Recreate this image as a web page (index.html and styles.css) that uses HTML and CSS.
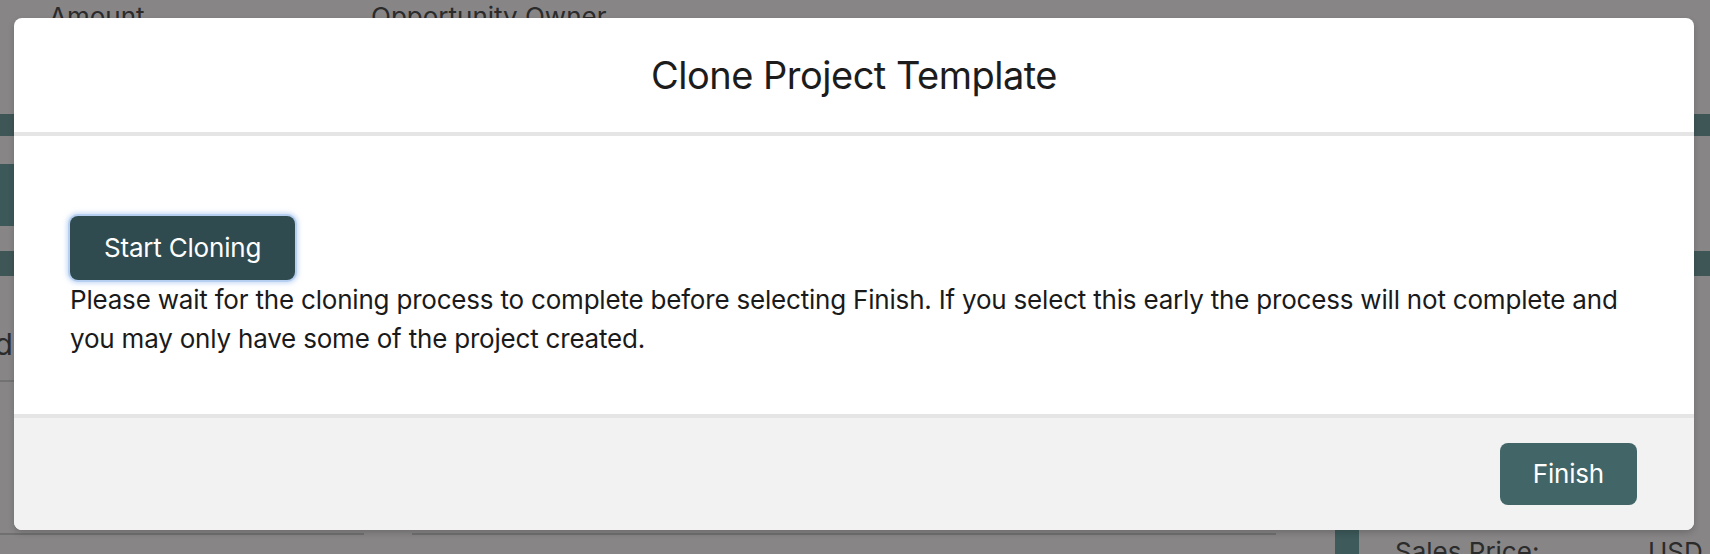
FILE: index.html
```html
<!DOCTYPE html>
<html lang="en">
<head>
<meta charset="utf-8">
<title>Clone Project Template</title>
<link rel="stylesheet" href="styles.css">
</head>
<body>
<div class="page">
  <div class="page-head">
    <span class="col-amount">Amount</span>
    <span class="col-owner">Opportunity Owner</span>
  </div>
  <div class="band band-top"></div>
  <div class="side-block"></div>
  <div class="band band-mid"></div>
  <div class="side-text"><span>Related</span></div>
  <div class="side-rule"></div>
  <div class="page-foot">
    <div class="foot-rule foot-rule-a"></div>
    <div class="foot-rule foot-rule-b"></div>
    <div class="foot-bar"></div>
    <span class="foot-label">Sales Price:</span>
    <span class="foot-value">USD 1</span>
  </div>
</div>

<div class="modal" role="dialog" aria-labelledby="modal-title">
  <header class="modal-header">
    <h2 id="modal-title" class="modal-title">Clone Project Template</h2>
  </header>
  <section class="modal-body">
    <button class="btn btn-start" type="button">Start Cloning</button>
    <p class="modal-text">Please wait for the cloning process to complete before selecting Finish. If you select this early the process will not complete and you may only have some of the project created.</p>
  </section>
  <footer class="modal-footer">
    <button class="btn btn-finish" type="button">Finish</button>
  </footer>
</div>
</body>
</html>
```

FILE: styles.css
```css
* { box-sizing: border-box; }

html, body {
  margin: 0;
  padding: 0;
}

body {
  width: 1710px;
  height: 554px;
  overflow: hidden;
  background: #878586;
  font-family: Inter, "Noto Sans", "Liberation Sans", sans-serif;
  color: #212529;
  position: relative;
}

/* ---------- dimmed page behind the modal ---------- */
.page {
  height: 554px;
  display: flex;
  flex-direction: column;
  overflow: hidden;
}

.page-head {
  display: flex;
  padding-left: 49px;
  padding-top: 1px;
  font-size: 26px;
  line-height: 32px;
  color: #2b2b2b;
  height: 114px;
  flex-shrink: 0;
}

.col-amount { width: 322px; }

.band {
  background: #3f5657;
  height: 22px;
  flex-shrink: 0;
}

.side-block {
  margin-top: 28px;
  width: 14px;
  height: 62px;
  background: #3d5859;
  flex-shrink: 0;
}

.band-mid {
  margin-top: 25px;
  height: 25px;
}

.side-text {
  margin-top: 54px;
  width: 13px;
  display: flex;
  justify-content: flex-end;
  font-size: 30px;
  line-height: 28px;
  color: #2b2b2b;
  white-space: nowrap;
  flex-shrink: 0;
}

.side-rule {
  margin-top: 22px;
  width: 14px;
  height: 2px;
  background: #737273;
  flex-shrink: 0;
}

.page-foot {
  margin-top: auto;
  height: 24px;
  display: flex;
  align-items: flex-start;
  flex-shrink: 0;
}

.foot-rule {
  height: 2px;
  margin-top: 3px;
  background: #717071;
  flex-shrink: 0;
}

.foot-rule-a { width: 364px; }
.foot-rule-b { width: 864px; margin-left: 48px; }

.foot-bar {
  width: 24px;
  height: 24px;
  margin-left: 59px;
  background: #3e5a5b;
  flex-shrink: 0;
}

.foot-label {
  margin-left: 36px;
  margin-top: 9px;
  font-size: 26px;
  line-height: 26px;
  color: #2b2b2b;
  width: 253px;
  flex-shrink: 0;
  white-space: nowrap;
}

.foot-value {
  margin-top: 9px;
  font-size: 26px;
  line-height: 26px;
  color: #2b2b2b;
  white-space: nowrap;
}

/* ---------- modal ---------- */
.modal {
  position: absolute;
  top: 18px;
  left: 14px;
  width: 1680px;
  height: 512px;
  background: #ffffff;
  border-radius: 8px;
  overflow: hidden;
  display: flex;
  flex-direction: column;
  box-shadow: 0 3px 6px rgba(0, 0, 0, 0.18);
}

.modal-header {
  height: 118px;
  border-bottom: 4px solid #e5e5e5;
  display: flex;
  align-items: center;
  justify-content: center;
}

.modal-title {
  margin: 0;
  font-size: 38px;
  font-weight: 400;
  line-height: 46px;
  letter-spacing: -0.5px;
  color: #1c1c1c;
}

.modal-body {
  flex: 1;
  padding: 80px 56px 0 56px;
}

.btn {
  font-family: inherit;
  font-size: 26px;
  line-height: 32px;
  letter-spacing: -0.2px;
  color: #ffffff;
  border: none;
  border-radius: 8px;
  cursor: pointer;
}

.btn-start {
  display: block;
  height: 64px;
  padding: 0 34px;
  background: #2f4b4f;
  box-shadow: 0 0 0 2px rgba(180, 205, 240, 0.9), 0 0 5px 3px rgba(140, 180, 235, 0.55);
}

.modal-text {
  margin: 0;
  font-size: 26px;
  line-height: 39px;
  letter-spacing: -0.2px;
  color: #1a1a1a;
}

.modal-footer {
  height: 116px;
  border-top: 4px solid #e5e5e5;
  background: #f2f2f2;
  display: flex;
  align-items: center;
  justify-content: flex-end;
  padding: 0 57px 0 0;
}

.btn-finish {
  height: 62px;
  padding: 0 33px;
  background: #426567;
}
```
